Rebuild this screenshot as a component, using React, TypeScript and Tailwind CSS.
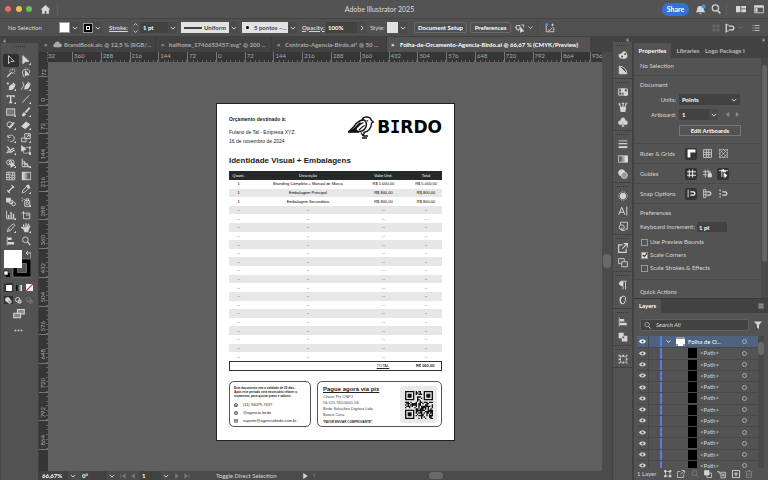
import type { ReactNode } from "react";

type IconProps = { children: ReactNode; className?: string };

// Stroke icon on a 16 unit grid
function Icon({ children, className = "size-[11px]" }: IconProps) {
  return (
    <svg viewBox="0 0 16 16" className={"shrink-0 " + className} fill="none" stroke="currentColor" strokeWidth="1.4" aria-hidden="true">
      {children}
    </svg>
  );
}

function Chevron({ className = "size-[6px]" }: { className?: string }) {
  return (
    <Icon className={className}>
      <path d="M2 5l6 6 6-6" strokeWidth="2.6" />
    </Icon>
  );
}

function Drop({ label }: { label: string }) {
  return (
    <button aria-label={label} className="flex h-[11px] w-[9px] shrink-0 items-center justify-center bg-[#4a4a4a]">
      <Chevron />
    </button>
  );
}

const corner = <path d="M16 16h-3.5l3.5-3.5z" fill="currentColor" stroke="none" />;

const tools: { name: string; art: ReactNode }[] = [
  { name: "Selection", art: <path d="M4 1v13l3.5-3.5 5.5-.5z" /> },
  { name: "Direct Selection", art: <>{corner}<path d="M3 1v13l4-3.5 5.5-.5z" fill="currentColor" /></> },
  { name: "Magic Wand", art: <><path d="M2 14l7-7" strokeWidth="2" /><path d="M10 1v3M10 7v2M5 5h2M13 5h2M12 3l2-2M12 7l2 2M7 2l1 1" /></> },
  { name: "Lasso", art: <><path d="M5 11C1 10 1 3 7 2c6-1 8 4 6 6M3 11c0 2 2 2 2 4" /><path d="M7 4v9l2-2 4 0z" fill="currentColor" /></> },
  { name: "Pen", art: <>{corner}<path d="M1 4h4M3 2v4" /><path d="M5 14l1-6 5-3 3 3-3 5z" fill="currentColor" /><path d="M11 3l4 4" strokeWidth="2" /></> },
  { name: "Curvature", art: <>{corner}<path d="M1 14c0-5 3-3 3-7s-2-4-1-6" /><path d="M6 13l1-6 4-3 3 3-3 5z" fill="currentColor" /><path d="M11 2l4 4" strokeWidth="2" /></> },
  { name: "Type", art: <>{corner}<path d="M2 5V3h11v2M7.500 3v11M5 13.500h5" strokeWidth="2.200" /></> },
  { name: "Line Segment", art: <>{corner}<path d="M2 14L13 2" /></> },
  { name: "Rectangle", art: <>{corner}<rect x="1" y="3" width="13" height="10" fill="#777" /></> },
  { name: "Paintbrush", art: <>{corner}<path d="M14 1L7 9" strokeWidth="2.600" /><path d="M2 14c1-1 0-4 3-5l2 2c0 3-3 4-5 3z" fill="currentColor" /></> },
  { name: "Shaper", art: <>{corner}<ellipse cx="6" cy="7" rx="4.500" ry="4" /><path d="M5 13l8-9" strokeWidth="3" /></> },
  { name: "Eraser", art: <>{corner}<path d="M1 10l7-7 6 4-7 7z" fill="currentColor" /></> },
  { name: "Rotate", art: <>{corner}<path d="M3 3v4h4M3 6c3-4 9-3 10 1s-2 7-6 7" /><path d="M3 10l2 3" strokeDasharray="1 1" /></> },
  { name: "Scale", art: <>{corner}<path d="M6 1h9v8H6zM1 8h7v6H1zM9 7l4-4M10 3h3v3" /></> },
  { name: "Width", art: <>{corner}<path d="M1 3c5 0 3 5 6 5s3-4 6-2M1 13c3-5 5 0 8-2s2-3 5-2" strokeWidth="2" /><circle cx="5" cy="9" r="2" /></> },
  { name: "Free Transform", art: <>{corner}<rect x="4" y="4" width="10" height="9" strokeDasharray="2 1" /><path d="M1 1v9l3-2 4-1z" fill="currentColor" /><path d="M13 3h2v2h-2zM13 12h2v2h-2z" fill="currentColor" /></> },
  { name: "Shape Builder", art: <>{corner}<circle cx="5" cy="7" r="4" /><circle cx="9" cy="7" r="4" /><path d="M8 6v9l2-2 4-1z" fill="currentColor" /></> },
  { name: "Perspective Grid", art: <>{corner}<path d="M2 1v13h12L2 4M2 8l8 3M6 5v9M10 8v6" /></> },
  { name: "Mesh", art: <path d="M1 2h13v12H1zM1 6c5-2 8 3 13 0M1 11c5-3 8 2 13-1M5 2c-2 5 3 7 0 12M10 2c2 5-2 7 0 12" /> },
  { name: "Gradient", art: <><defs><linearGradient id="toolFade"><stop stopColor="#eee" /><stop offset="1" stopColor="#333" /></linearGradient></defs><rect x="2" y="2" width="13" height="12" fill="url(#toolFade)" /></> },
  { name: "Dimension", art: <><path d="M3 13l9-9M2 10l4 4M9 2l4 4" strokeWidth="1.800" /></> },
  { name: "Eyedropper", art: <>{corner}<path d="M2 14l1-4 6-6 3 3-6 6z" /><path d="M9 2l5 5M11 4l2-2" strokeWidth="3" /></> },
  { name: "Blend", art: <><rect x="1" y="2" width="6" height="6" fill="currentColor" /><circle cx="8" cy="8" r="3" fill="#888" /><circle cx="12" cy="11" r="3" /></> },
  { name: "Symbol Sprayer", art: <>{corner}<path d="M6 6h8v9H6zM8 3h4v3H8zM1 2h2M4 4h2M1 6h2" /><circle cx="10" cy="10.500" r="2" /></> },
  { name: "Column Graph", art: <>{corner}<path d="M1 1v13h13" /><path d="M4 13V8M8 13V3M12 13V6" strokeWidth="2.200" /></> },
  { name: "Artboard", art: <><path d="M4 5h10v9H4zM1 5h4M4 2v3M8 8h6" /></> },
  { name: "Slice", art: <>{corner}<path d="M2 14l2-6 8-7 2 3-7 8z" /><path d="M4 10l3 2" /></> },
  { name: "Hand", art: <>{corner}<path d="M4 9L1 7M5 8L4 3M8 7V1M10 8l2-6M12 9l2-4" strokeWidth="2" strokeLinecap="round" /><path d="M4 8h8l-1 6H6z" fill="currentColor" /></> },
  { name: "Align", art: <><path d="M2 1v14" /><path d="M3 4.500h6M3 11.500h10" strokeWidth="4" /></> },
  { name: "Zoom", art: <><circle cx="7" cy="6" r="4.500" /><path d="M10 9l5 5.500" strokeWidth="2" /></> },
];

function Toolbar() {
  return (
    <aside className="flex w-[38px] shrink-0 flex-col border-l border-[#474747] bg-[#535353]">
      <div className="flex h-[6px] items-center bg-[#424242] pl-[2px] text-[7px] leading-none">«</div>
      <div className="mx-[13px] mt-[2px] h-[2px] border-b border-dotted border-[#333]" />
      <div className="mt-[7px] grid h-[193px] grid-cols-2 grid-rows-15 pr-[4px] pl-[2px]">
        {tools.map((t, i) => (
          <button
            key={t.name}
            aria-label={t.name}
            className={i === 0 ? "flex items-center justify-center rounded-xs bg-[#303030]" : "flex items-center justify-center"}
          >
            <Icon className="size-[10px]">{t.art}</Icon>
          </button>
        ))}
      </div>
      <svg viewBox="0 0 28 29" className="mt-[2px] ml-[2px] h-[29px] w-[28px]" aria-label="Fill and stroke" role="img">
        <path d="M10 10h18v18H10zM14.500 14.500h9v9h-9z" fill="#000" fillRule="evenodd" stroke="#999" strokeWidth=".6" />
        <rect x="1" y="1" width="18" height="18" fill="#fff" />
        <path d="M23 4h4v5M24 2l-2 2 2 2" fill="none" stroke="#ccc" transform="translate(1 0)" />
        <rect x="3" y="24" width="4" height="4" fill="#000" />
        <rect x="1" y="22" width="4" height="4" fill="#fff" stroke="#000" strokeWidth=".6" />
      </svg>
      <div className="mt-[5px] grid h-[9px] grid-cols-3 gap-px pr-[4px] pl-[3px]">
        <button aria-label="Color" className="flex items-center justify-center bg-[#303030]"><i className="size-[6px] bg-white" /></button>
        <button aria-label="Gradient" className="flex items-center justify-center"><i className="size-[6px] bg-linear-to-r from-black to-white" /></button>
        <button aria-label="None" className="flex items-center justify-center">
          <svg viewBox="0 0 6 6" className="size-[7px] bg-white"><path d="M0 6L6 0" stroke="#e02020" /></svg>
        </button>
      </div>
      <div className="mt-[4px] grid h-[8px] grid-cols-3 gap-px pr-[4px] pl-[3px]">
        {["Draw Normal", "Draw Behind", "Draw Inside"].map((n, i) => (
          <button key={n} aria-label={n} className={["flex items-center justify-center bg-[#303030]", "flex items-center justify-center", "flex items-center justify-center opacity-30"][i]}>
            <Icon className="size-[7px]"><circle cx="6" cy="6" r="5" fill={i === 0 ? "currentColor" : "none"} strokeWidth="2" /><rect x="7" y="7" width="7" height="7" rx="2" fill="#999" strokeWidth="2" /></Icon>
          </button>
        ))}
      </div>
      <button aria-label="Change Screen Mode" className="mt-[4px] flex justify-center pr-[2px]">
        <Icon className="size-[12px]"><path d="M6 2h9v6H6z" fill="#888" /><path d="M1 7h9v6H1z" fill="#888" /></Icon>
      </button>
      <button aria-label="Edit Toolbar" className="mt-[6px] flex justify-center pr-[2px]">
        <Icon className="size-[9px]"><path d="M1 8h3M6.500 8h3M12 8h3" strokeWidth="3" /></Icon>
      </button>
    </aside>
  );
}

function TitleBar() {
  return (
    <header className="flex h-[19px] shrink-0 items-center border-b border-[#444] bg-[#535353] pr-[4px] pl-[5px]">
      <button aria-label="Close window" className="size-[6px] rounded-full bg-[#ee6a5f]" />
      <button aria-label="Minimize window" className="ml-[5px] size-[6px] rounded-full bg-[#f5bd4f]" />
      <button aria-label="Zoom window" className="ml-[4px] size-[6px] rounded-full bg-[#61c454]" />
      <button aria-label="Home" className="ml-[8px]">
        <Icon className="size-[11px]"><path d="M8 1.500L1 8h2v6h4v-4h2v4h4V8h2z" fill="currentColor" stroke="none" /></Icon>
      </button>
      <i className="ml-[6px] h-[11px] w-px bg-[#606060]" />
      <h1 className="flex-1 pl-[39px] text-center text-[7px] text-[#dcdcdc]">Adobe Illustrator 2025</h1>
      <button className="h-[13px] w-[27px] rounded-full bg-[#3470e0] text-[7px] font-bold text-white">Share</button>
      <button aria-label="Notifications" className="ml-[6px]">
        <Icon className="size-[11px]">
          <path d="M1 12l2-3c0-4 1-6 5-6s5 2 5 6l2 3zM6 13h4l-2 2z" fill="currentColor" stroke="none" />
          <circle cx="12.500" cy="3.500" r="3" fill="#4a8cf0" stroke="none" />
        </Icon>
      </button>
      <button aria-label="Search" className="ml-[5px]">
        <Icon className="size-[10px]"><circle cx="7" cy="6.500" r="5" strokeWidth="2" /><path d="M10.500 10.500l4.500 4.500" strokeWidth="2.400" /></Icon>
      </button>
      <i className="ml-[5px] h-[11px] w-px bg-[#606060]" />
      <button aria-label="Arrange Documents" className="ml-[9px]">
        <Icon className="size-[10px]"><path d="M0 3h7v10H0zM8.500 3H16v4H8.500zM8.500 8.500H16V13H8.500z" fill="currentColor" stroke="none" /></Icon>
      </button>
      <button aria-label="Switch Workspace" className="ml-[8px]">
        <Icon className="size-[10px]"><path d="M1 3h14v11H1z" /><path d="M1 3h14v2H1zM3 7h2v5H3z" fill="currentColor" /></Icon>
      </button>
    </header>
  );
}

function ControlBar() {
  return (
    <div className="flex h-[18px] shrink-0 items-center border-b border-[#404040] bg-[#505050] pr-[8px] pl-[8px]">
      <span className="w-[51px] shrink-0">No Selection</span>
      <button aria-label="Fill color" className="size-[11px] border border-[#999] bg-white" />
      <Drop label="Fill options" />
      <button aria-label="Stroke color" className="ml-[4px] flex size-[10px] items-center justify-center border border-[#999] bg-black">
        <i className="size-[4px] border border-white bg-black" />
      </button>
      <Drop label="Stroke options" />
      <label htmlFor="strokeWeight" className="ml-[7px] w-[22px] font-bold underline">Stroke:</label>
      <span className="flex w-[9px] flex-col items-center gap-[2px]">
        <button aria-label="Increase" className="rotate-180"><Chevron className="size-[5px]" /></button>
        <button aria-label="Decrease"><Chevron className="size-[5px]" /></button>
      </span>
      <input id="strokeWeight" defaultValue="1 pt" className="h-[11px] w-[28px] bg-[#424242] px-[3px] font-bold text-white" />
      <Drop label="Stroke weights" />
      <button className="ml-[4px] flex h-[11px] w-[48px] items-center justify-between bg-[#e2e2e2] px-[3px] font-bold text-[#444]">
        <i className="h-[2px] w-[18px] bg-[#444]" />Uniform
      </button>
      <Drop label="Width profiles" />
      <button className="ml-[4px] flex h-[11px] w-[46px] items-center gap-[5px] bg-[#e2e2e2] pl-[4px] font-bold text-[#444]">
        <i className="size-[3px] rounded-full bg-black" />5 pontos –...
      </button>
      <Drop label="Brushes" />
      <label htmlFor="opacity" className="ml-[5px] w-[24px] font-bold underline">Opacity:</label>
      <input id="opacity" defaultValue="100%" className="h-[11px] w-[31px] bg-[#424242] px-[2px] font-bold text-white" />
      <button aria-label="Opacity slider" className="flex h-[11px] w-[9px] items-center justify-center bg-[#4a4a4a]">
        <span className="-rotate-90"><Chevron /></span>
      </button>
      <span className="ml-[4px] w-[17px]">Style:</span>
      <button aria-label="Graphic style" className="size-[11px] bg-[#e2e2e2]" />
      <Drop label="Graphic styles" />
      <button className="ml-[7px] h-[11px] w-[53px] rounded-xs border border-[#6a6a6a] leading-none font-bold text-white">Document Setup</button>
      <button className="ml-[3px] h-[11px] w-[41px] rounded-xs border border-[#6a6a6a] leading-none font-bold text-white">Preferences</button>
      <button aria-label="Select Similar Objects" className="ml-[4px] flex items-center gap-[3px]">
        <Icon className="size-[10px]"><path d="M2 4h6v6H2zM0 7h2M5 10v3M10 3h4v4" /><path d="M9 7v8l2-2h3z" fill="currentColor" /></Icon>
        <Chevron className="size-[5px]" />
      </button>
      <i className="ml-[4px] h-[18px] w-px bg-[#484848]" />
      <button aria-label="Start Global Edit" className="ml-[7px]">
        <Icon className="size-[10px]"><path d="M4 4H2v10h12V7M5 11l2 1 5-5M12 1v4M10 3h4" /><circle cx="2.500" cy="2.500" r="2.500" fill="#4a8cf0" stroke="none" /></Icon>
      </button>
      <span className="ml-auto flex items-center">
        <Icon className="size-[8px] opacity-30"><path d="M2 2h4v4H2zM10 2h4v4h-4zM2 10h4v4H2zM10 10h4v4h-4z" /></Icon>
        <button aria-label="Snap to Glyph" className="mr-[3px] ml-[5px]">
          <Icon className="size-[10px]"><path d="M2 1v14M6 5h5c4 0 4 6 0 6H6" strokeWidth="2.200" /><path d="M3 3h3M3 13h3" /></Icon>
        </button>
        <span className="opacity-30"><Chevron className="size-[5px]" /></span>
        <button aria-label="Control panel options" className="ml-[9px]">
          <Icon className="size-[8px]"><path d="M1 3h2M5 3h10M1 8h2M5 8h10M1 13h2M5 13h10" strokeWidth="1.600" /></Icon>
        </button>
      </span>
    </div>
  );
}

function DocumentTabs() {
  const base = "flex items-center whitespace-nowrap border-r border-[#3a3a3a] pl-[5px] text-[#aaa]";
  return (
    <div role="tablist" className="flex h-[15px] shrink-0 bg-[#424242] font-bold">
      <button role="tab" className={base + " w-[117px]"}>
        <span className="w-[9px] text-left">×</span>
        <Icon className="size-[9px]"><path d="M3 13c-4-1-3-6 0-6 0-5 8-6 9-1 5 0 5 6 1 7z" fill="currentColor" stroke="none" /></Icon>
        <span className="ml-[2px]">BrandBook.aic @ 12,5 % (RGB/...</span>
      </button>
      <button role="tab" className={base + " w-[116px]"}>
        <span className="w-[8px] text-left">×</span>halftone_1746653457.svg* @ 200 ...
      </button>
      <button role="tab" className={base + " w-[115px]"}>
        <span className="w-[8px] text-left">×</span>Contrato-Agencia-Birdo.ai* @ 50 ...
      </button>
      <button role="tab" aria-selected="true" className="flex w-[203px] items-center bg-[#535353] pl-[4px] whitespace-nowrap text-white">
        <span className="w-[9px] text-left">×</span>Folha-de-Orcamento-Agencia-Birdo.ai @ 66,67 % (CMYK/Preview)
      </button>
    </div>
  );
}

const rulerX = [360, 288, 216, 144, 72, 0, 72, 144, 216, 288, 360, 432, 504, 576, 648, 720, 792, 864];
const rulerY = [0, 72, 144, 216, 288, 360, 432, 504, 576, 648, 720, 792, 864];
const ticks = [0, 1, 2, 3, 4, 5];

function HorizontalRuler() {
  return (
    <div className="flex h-[10px] shrink-0 overflow-hidden bg-[#363636] leading-[8px] text-[#aaa]">
      <div className="w-[9px] border-r border-dotted border-[#666]" />
      <div className="w-[24px]">32</div>
      {rulerX.map((n, i) => (
        <div key={i} className="flex min-w-0 flex-1 flex-col border-l border-[#777] pl-px">
          <span className="h-[8px]">{n}</span>
          <span className="grid h-[2px] grid-cols-6">{ticks.map((t) => <i key={t} className="border-r border-[#666]" />)}</span>
        </div>
      ))}
      <div className="w-[12px] border-l border-[#777] pl-px">936</div>
      <div className="w-[10px] bg-[#4b4b4b]" />
    </div>
  );
}

function VerticalRuler() {
  return (
    <div className="flex w-[9px] shrink-0 flex-col overflow-hidden bg-[#363636] text-[#aaa]">
      <div className="flex h-[14px] rotate-180 items-center leading-[7px] [writing-mode:vertical-rl]">72</div>
      {rulerY.map((n, i) => (
        <div key={i} className="flex min-h-0 flex-1 items-end border-t border-[#777]">
          <span className="w-[7px] rotate-180 pt-[3px] leading-[7px] [writing-mode:vertical-rl]">{n}</span>
          <span className="grid w-[2px] grid-rows-6 self-stretch">{ticks.map((t) => <i key={t} className="border-b border-[#666]" />)}</span>
        </div>
      ))}
      <div className="h-[22px] border-t border-[#777]" />
    </div>
  );
}

function BirdLogo() {
  return (
    <svg viewBox="0 0 26 23" className="h-[23px] w-[26px]" fill="none" stroke="#111" strokeWidth="1.3" strokeLinejoin="round" role="img" aria-label="Bird">
      <path d="M14 5c0-5 8-5.500 9.500-.5L25.500 6 23.500 7c0 5-3 8.500-8 9.500" />
      <path d="M14.500 4C10 5 8 7.500 6 10.500L.8 15.800 11 15.500c5 0 8.500-4.500 7-9.500-.8-2-3.500-2.500-3.500-2z" strokeWidth="1.500" />
      <path d="M15.500 6.500c-3 1-5.500 3.500-8.500 7.500M16.500 9.500c-2 1-3.500 2.500-5.500 4.500M12.500 6.500l-6 6" />
      <path d="M.5 16h10l-4-3.500z" fill="#111" />
      <path d="M13 16.500l2 3.500M16.500 16.500L15 20M15 20h5M14 22h5" />
      <circle cx="19.500" cy="4.800" r=".8" fill="#111" stroke="none" />
    </svg>
  );
}

const QR = 21;

function qrDark(x: number, y: number) {
  for (const [cx, cy] of [[3, 3], [QR - 4, 3], [3, QR - 4]]) {
    const d = Math.max(Math.abs(x - cx), Math.abs(y - cy));
    if (d <= 4) return d === 3 || d <= 1;
  }
  return ((x * 7 + y * 13 + x * y * 5 + ((x * x) ^ (y * 11))) % 7) < 4;
}

function QrCode() {
  let d = "";
  for (let y = 0; y < QR; y++) {
    for (let x = 0; x < QR; x++) if (qrDark(x, y)) d += `M${x} ${y}h1v1h-1z`;
  }
  return (
    <svg viewBox="0 0 21 21" className="size-[28px]" role="img" aria-label="QR code">
      <path d={d} fill="#111" />
    </svg>
  );
}

const items = [
  ["1", "Branding  Completo + Manual de Marca", "R$ 5.000,00", "R$ 5.000,00"],
  ["1", "Embalagem Principal", "R$ 800,00", "R$ 800,00"],
  ["1", "Embalagem Secundária", "R$ 800,00", "R$ 800,00"],
  ...Array.from({ length: 18 }, () => ["--", "--", "--", "--"]),
];

function Artboard() {
  return (
    <article className="mt-[41px] ml-[168px] flex h-[338px] w-[239px] shrink-0 flex-col border border-[#222] bg-white px-[12px] font-['Liberation_Sans',sans-serif] text-[5px] text-[#222]">
      <div className="mt-[11px] flex justify-between">
        <div className="leading-[8px]">
          <p className="font-bold">Orçamento destinado à:</p>
          <p className="mt-[5px]">Fulano de Tal - Empresa XYZ</p>
          <p className="mt-px">16 de novembro de 2024</p>
        </div>
        <div className="flex h-[25px] items-center gap-[3px] text-black">
          <BirdLogo />
          <span className="font-['DejaVu_Sans',sans-serif] text-[17px] leading-[17px] font-bold">
            B<span className="font-['DejaVu_Sans_Mono',monospace]">I</span>RDO
          </span>
        </div>
      </div>
      <h2 className="mt-[10px] text-[8px] leading-[12px] font-bold">Identidade Visual + Embalagens</h2>
      <table className="mt-[4px] h-[190px] w-full table-fixed border-collapse text-center text-[4px] leading-[6px]">
        <thead>
          <tr className="h-[9px] bg-[#262929] text-white">
            <th className="w-[9%] p-0 font-normal">Quant.</th>
            <th className="w-[51%] p-0 pl-[11px] font-normal">Descrição</th>
            <th className="w-[25%] p-0 font-normal">Valor Unit.</th>
            <th className="w-[15%] p-0 font-normal">Total</th>
          </tr>
        </thead>
        <tbody>
          {items.map((row, i) => (
            <tr key={i} className="text-black even:bg-[#e7e7e7]">
              <td className="p-0">{row[0]}</td>
              <td className="p-0 pl-[11px]">{row[1]}</td>
              <td className="p-0">{row[2]}</td>
              <td className="p-0">{row[3]}</td>
            </tr>
          ))}
        </tbody>
      </table>
      <div className="flex h-[10px] shrink-0 items-center border border-[#333] text-[4px] leading-none">
        <span className="w-[60%]" />
        <span className="w-[25%] text-center underline">TOTAL</span>
        <b className="w-[15%] text-center">R$ 000,00</b>
      </div>
      <div className="mt-[10px] flex gap-[6px] text-[4px]">
        <section className="h-[46px] w-[82px] rounded-[5px] border border-[#555] pt-[4px] pl-[4px]">
          <p className="text-[3px] leading-[4px] font-bold whitespace-nowrap">
            Este documento tem a validade de 05 dias.<br />Após este período será necessário refazer o<br />orçamento, para ajustar prazo e valores.
          </p>
          <ul className="mt-[3px] leading-[8px]">
            <li className="flex items-center gap-[5px]">
              <Icon className="size-[4px]"><circle cx="8" cy="8" r="6" strokeWidth="3" /><path d="M2 15l2-4M5 6l5 5" strokeWidth="3" /></Icon>(11) 94079-7437
            </li>
            <li className="flex items-center gap-[5px]">
              <Icon className="size-[4px]"><rect x="2" y="2" width="12" height="12" rx="3" strokeWidth="2.600" /><circle cx="8" cy="8" r="3" strokeWidth="2" /></Icon>@agencia.birdo
            </li>
            <li className="flex items-center gap-[5px]">
              <Icon className="size-[4px]"><path d="M1 3h14v10H1zl7 6 7-6" strokeWidth="2.400" /></Icon>suporte@agenciabirdo.com.br
            </li>
          </ul>
        </section>
        <section className="flex h-[46px] flex-1 justify-between rounded-[5px] border border-[#555] pt-[4px] pr-[4px] pl-[5px] whitespace-nowrap">
          <div className="leading-[6px]">
            <h3 className="text-[6px] leading-[6px] font-bold underline">Pague agora via pix</h3>
            <p className="mt-[2px] text-[#444]">Chave Pix CNPJ<br />56.125.761/0001-56<br />Birdo Soluções Digitais Ltda<br />Banco Cora</p>
            <p className="mt-px text-[3px] font-bold">*FAVOR ENVIAR COMPROVANTE*</p>
          </div>
          <div className="flex size-[37px] items-center justify-center rounded-[3px] bg-[#e9e9e9]">
            <QrCode />
          </div>
        </section>
      </div>
    </article>
  );
}

function StatusBar() {
  return (
    <footer className="flex h-[9px] shrink-0 items-center overflow-hidden bg-[#4b4b4b] leading-none">
      <input aria-label="Zoom level" defaultValue="66,67%" className="h-[9px] w-[29px] bg-[#414141] pl-[3px] font-bold text-white" />
      <Drop label="Zoom presets" />
      <input aria-label="Rotate view" defaultValue="0°" className="ml-[4px] h-[9px] w-[26px] bg-[#414141] pl-px font-bold text-white" />
      <Drop label="Rotate presets" />
      <span className="flex w-[24px] justify-center gap-[4px] text-[#777]">
        <Icon className="size-[6px]"><path d="M2 2v12M14 2L6 8l8 6z" fill="currentColor" strokeWidth="2" /></Icon>
        <Icon className="size-[6px]"><path d="M12 2L4 8l8 6z" fill="currentColor" /></Icon>
      </span>
      <input aria-label="Artboard number" defaultValue="1" className="h-[9px] w-[21px] bg-[#414141] pl-[2px] font-bold text-white" />
      <Drop label="Artboard navigation" />
      <span className="flex w-[24px] justify-center gap-[4px] text-[#777]">
        <Icon className="size-[6px]"><path d="M4 2l8 6-8 6z" fill="currentColor" /></Icon>
        <Icon className="size-[6px]"><path d="M14 2v12M2 2l8 6-8 6z" fill="currentColor" strokeWidth="2" /></Icon>
      </span>
      <span className="w-[108px] pl-[22px] whitespace-nowrap">Toggle Direct Selection</span>
      <Icon className="size-[6px]"><path d="M4 1l10 7-10 7z" fill="currentColor" /></Icon>
      <span className="ml-[4px] rotate-90 text-[#888]"><Chevron className="size-[5px]" /></span>
      <i className="ml-[112px] h-[7px] w-[14px] rounded-full bg-[#696969]" />
    </footer>
  );
}

const dock: { name: string; art: ReactNode }[][] = [
  [
    { name: "Color", art: <path d="M1 9c0-4 5-2 6-5s5-3 7 1 1 9-4 9-9-1-9-5zM5 9h3v3H5zM10 5h3v3h-3z" fill="currentColor" fillRule="evenodd" stroke="none" /> },
    { name: "Color Guide", art: <><path d="M2 2l12 12H2z" fill="currentColor" /><path d="M2 2c7 0 12 5 12 12" /></> },
  ],
  [
    { name: "Swatches", art: <><path d="M1 3h14v10H1zM1 8h14M6 3v10M10 3v10" /><path d="M6 3h4v5H6zM10 8h5v5h-5z" fill="currentColor" /></> },
    { name: "Brushes", art: <path d="M4 9h8l-1 6H5zM8 9V2M5 8L2 4M11 8l2-5M6 2h4M1 3h3M12 2h3" fill="currentColor" strokeWidth="1.800" /> },
    { name: "Symbols", art: <><circle cx="8" cy="4.500" r="3" fill="currentColor" /><circle cx="4" cy="9" r="3" fill="currentColor" /><circle cx="12" cy="9" r="3" fill="currentColor" /><path d="M8 8v6M6 14.500h4" strokeWidth="2" /></> },
  ],
  [
    { name: "Stroke", art: <><path d="M1 3h14" /><path d="M1 7.500h14" strokeWidth="2" /><path d="M1 13h14" strokeWidth="3" /></> },
    { name: "Gradient", art: <><defs><linearGradient id="dockFade"><stop stopColor="#333" /><stop offset="1" stopColor="#fff" /></linearGradient></defs><rect x="1" y="3" width="14" height="10" fill="url(#dockFade)" /></> },
    { name: "Transparency", art: <><circle cx="6" cy="6" r="5" fill="currentColor" /><circle cx="10" cy="10" r="5" fill="#999" /></> },
  ],
  [
    { name: "Appearance", art: <><circle cx="8" cy="8" r="4.500" fill="currentColor" /><circle cx="8" cy="8" r="6.800" strokeDasharray="1.500 1.500" /></> },
    { name: "Character Styles", art: <path d="M1 14L6 2l5 12M3 10h6M14 1v14" strokeWidth="1.600" /> },
    { name: "Graphic Styles", art: <><path d="M4 6V2h11v11h-4" /><circle cx="6" cy="10" r="4" /><path d="M6 10v5h5" /></> },
  ],
  [
    { name: "Asset Export", art: <path d="M7 3H1v12h12V9M9 1h6v6M15 1L7 9" strokeWidth="1.800" /> },
    { name: "Artboards", art: <><path d="M1 1h9v8H1z" /><path d="M6 6h9v8H6z" fill="#535353" /></> },
  ],
  [
    { name: "Paragraph", art: <path d="M14 2H6c-5 0-5 7 0 7h2V2M8 9v6M12 2v13" fill="currentColor" /> },
    { name: "OpenType", art: <><ellipse cx="8" cy="8" rx="4" ry="6.500" transform="rotate(15 8 8)" /><path d="M5 3C3 6 3 11 6 14" strokeWidth="2.400" /></> },
  ],
  [
    { name: "Align", art: <><path d="M2 1v14" /><path d="M3 5h7M3 11h11" strokeWidth="4" /></> },
    { name: "Pathfinder", art: <path d="M1 1h8v5h6v9H6V10H1zM7 7h3v3H7z" fill="currentColor" fillRule="evenodd" stroke="none" /> },
  ],
  [{ name: "Transform", art: <><path d="M4 4h9v9H4z" strokeDasharray="2 1" /><path d="M1 1h3v3H1zM7 1h3v3H7zM13 1h2v3h-2zM1 7h3v3H1zM1 13h3v2H1zM7 13h3v2H7zM13 7h2v3h-2zM13 13h2v2h-2z" fill="currentColor" stroke="none" /></> }],
];

function Dock() {
  return (
    <nav aria-label="Panels" className="w-[21px] shrink-0 border-x border-[#424242] bg-[#535353]">
      <div className="h-[5px] bg-[#424242] pr-[3px] text-right text-[7px] leading-[5px]">«</div>
      {dock.map((group, g) => (
        <div key={g} className="border-b border-[#424242] pb-px">
          <div className="mx-[4px] h-[5px] pt-[3px]"><i className="block border-t border-dotted border-[#333]" /></div>
          {group.map((p) => (
            <button key={p.name} aria-label={p.name} className="flex h-[15px] w-full items-center justify-center">
              <Icon className="size-[10px]">{p.art}</Icon>
            </button>
          ))}
        </div>
      ))}
    </nav>
  );
}

function IconRow({ label, icons, on }: { label: string; icons: ReactNode[]; on: boolean[] }) {
  return (
    <div className="flex h-[20px] items-center border-t border-[#484848] pl-[6px]">
      <span className="w-[45px]">{label}</span>
      {icons.map((art, i) => (
        <button key={i} aria-label={label + " " + (i + 1)} aria-pressed={on[i]} className={on[i] ? "mr-[4px] flex size-[12px] items-center justify-center rounded-xs bg-[#333] text-white" : "mr-[4px] flex size-[12px] items-center justify-center"}>
          <Icon className="size-[9px]">{art}</Icon>
        </button>
      ))}
    </div>
  );
}

const magnet = <path d="M6 5h5c4 0 4 6 0 6H6" strokeWidth="2.2" />;

function Properties() {
  return (
    <section className="relative flex flex-col pr-[8px]">
      <div className="h-[17px] pt-[4px] pl-[6px]">No Selection</div>
      <div className="h-[68px] border-t border-[#484848] pt-[5px] pl-[6px]">
        <h2 className="leading-[8px]">Document</h2>
        <div className="mt-[5px] flex items-center">
          <label htmlFor="units" className="w-[36px] text-right">Units:</label>
          <span className="ml-[3px] flex h-[11px] w-[61px] items-center bg-[#424242] pr-[3px]">
            <select id="units" className="w-full appearance-none pl-[3px] font-bold text-white"><option>Points</option></select>
            <Chevron />
          </span>
        </div>
        <div className="mt-[4px] flex items-center">
          <label htmlFor="artboard" className="w-[36px] text-right">Artboard:</label>
          <input id="artboard" defaultValue="1" className="ml-[3px] h-[11px] w-[30px] bg-[#424242] pl-[3px] font-bold text-white" />
          <Drop label="Artboard list" />
          <Icon className="ml-[7px] size-[5px] opacity-40"><path d="M13 1L3 8l10 7z" fill="currentColor" /></Icon>
          <Icon className="ml-[5px] size-[5px] opacity-40"><path d="M3 1l10 7-10 7z" fill="currentColor" /></Icon>
        </div>
        <button className="mt-[5px] ml-[39px] h-[11px] w-[62px] border border-[#777] leading-none font-bold text-white">Edit Artboards</button>
      </div>
      <IconRow
        label="Ruler & Grids"
        on={[true, false, false]}
        icons={[
          <path key="a" d="M1 1h14v5H6v9H1z" fill="currentColor" stroke="none" />,
          <path key="b" d="M1 1h14v14H1zM1 6h14M1 10h14M6 1v14M10 1v14" />,
          <path key="c" d="M1 1h14v14H1zM1 1l14 14M15 1L1 15M8 1L1 8l7 7 7-7z" strokeDasharray="2 1" />,
        ]}
      />
      <IconRow
        label="Guides"
        on={[true, false, true]}
        icons={[
          <path key="a" d="M0 5h16M0 11h16M4 1v14M10 1v14" strokeWidth="1.6" />,
          <><path d="M0 5h14M0 10h7M4 1v14M9 1v6" /><path d="M9 9h6v5H9zM10 9V7h4v2" fill="currentColor" /></>,
          <><path d="M0 3h16M5 1v13M9 8v7" /><path d="M7 0l5 5h-5zM9 8l5 3-3 4z" fill="currentColor" /></>,
        ]}
      />
      <IconRow
        label="Snap Options"
        on={[true, false, false]}
        icons={[
          <><path d="M2 1v14" />{magnet}</>,
          <><path d="M1 1h4v14H1zM1 5h4M1 10h4" />{magnet}</>,
          <><path d="M2 1v3M2 7v3M2 13v2" strokeWidth="2.400" />{magnet}</>,
        ]}
      />
      <div className="h-[76px] border-t border-[#484848] pt-[5px] pl-[6px]">
        <h2 className="leading-[8px]">Preferences</h2>
        <div className="mt-[5px] mb-[6px] flex h-[10px] items-center">
          <label htmlFor="increment" className="w-[57px]">Keyboard Increment:</label>
          <input id="increment" defaultValue="1 pt" className="h-[10px] w-[30px] bg-[#424242] pl-[2px] font-bold text-white" />
        </div>
        {["Use Preview Bounds", "Scale Corners", "Scale Strokes & Effects"].map((l, i) => (
          <label key={l} className="mb-[5px] flex h-[8px] items-center gap-[2px] pl-px">
            <input type="checkbox" defaultChecked={i === 1} className="peer sr-only" />
            <span className="flex size-[7px] items-center justify-center border border-[#999] text-transparent peer-checked:bg-[#ddd] peer-checked:text-[#333]">
              <Icon className="size-[6px]"><path d="M2 8l4 4 8-9" strokeWidth="3" /></Icon>
            </span>
            {l}
          </label>
        ))}
      </div>
      <h2 className="h-[19px] border-t border-[#484848] pt-[8px] pl-[6px]">Quick Actions</h2>
      <div className="absolute inset-y-0 right-0 w-[7px] bg-[#494949] pt-[7px]">
        <i className="mx-px block h-[197px] rounded-full bg-[#636363]" />
      </div>
    </section>
  );
}

function LayerRow({ root }: { root?: boolean }) {
  return (
    <li className={root ? "flex items-center bg-[#4d6380] text-white" : "flex items-center border-t border-[#484848]"}>
      <button aria-label="Toggle visibility" className="flex h-full w-[11px] items-center justify-center">
        <Icon className="size-[7px]"><path d="M0 8c4-6 12-6 16 0-4 6-12 6-16 0z" fill="currentColor" stroke="none" /><circle cx="8" cy="8" r="2.500" fill="#444" stroke="none" /></Icon>
      </button>
      <span className="h-full w-[12px] border-l border-[#4a4a4a]" />
      <span className="h-full w-[2px] bg-[#5b7be0]" />
      {root ? (
        <>
          <button aria-label="Collapse layer" className="ml-[4px]"><Chevron className="size-[5px]" /></button>
          <svg viewBox="0 0 9 9" className="ml-[5px] size-[9px] bg-white"><path d="M1 0v2M8 0v2M1 9V7M8 9V7M2 1h5" stroke="#333" /></svg>
        </>
      ) : (
        <i className="ml-[26px] h-[10px] w-[9px] bg-black" />
      )}
      <span className="ml-[3px]">{root ? "Folha de O..." : "<Path>"}</span>
      <i className="mr-[11px] ml-auto size-[5px] rounded-full border border-[#aaa]" />
    </li>
  );
}

function Layers() {
  return (
    <section className="flex min-h-0 flex-1 flex-col">
      <div className="flex h-[15px] shrink-0 items-stretch justify-between border-t border-[#383838] bg-[#424242]">
        <h2 className="flex w-[27px] items-center bg-[#535353] pl-[5px] font-bold text-white">Layers</h2>
        <button aria-label="Layers menu" className="mr-[4px]"><Icon className="size-[6px]"><path d="M1 3h14M1 8h14M1 13h14" strokeWidth="2" /></Icon></button>
      </div>
      <div className="mt-[6px] flex items-center pr-[6px] pl-[6px]">
        <label className="flex h-[12px] flex-1 items-center gap-[5px] rounded-xs border border-[#606060] bg-[#424242] pl-[3px]">
          <Icon className="size-[7px]"><circle cx="7" cy="6" r="5" /><path d="M10 10l5 5" strokeWidth="2" /></Icon>
          <input aria-label="Search layers" placeholder="Search All" className="w-full italic placeholder:text-[#ddd]" />
        </label>
        <button aria-label="Filter layers" className="ml-[5px]"><Icon className="size-[8px]"><path d="M0 1h16l-6 7v8l-4-3V8z" fill="currentColor" stroke="none" /></Icon></button>
      </div>
      <div className="mt-[5px] flex min-h-0 flex-1 overflow-hidden pl-[3px]">
        <ul className="grid h-[135px] flex-1 grid-rows-12">
          <LayerRow root />
          {Array.from({ length: 11 }, (_, i) => <LayerRow key={i} />)}
        </ul>
        <div className="mr-[4px] w-[6px] bg-[#494949] pt-[6px]"><i className="block h-[13px] rounded-full bg-[#6a6a6a]" /></div>
      </div>
      <div className="flex h-[12px] shrink-0 items-center justify-between pr-[15px] pl-[3px]">
        <span className="mr-[2px]">1 Layer</span>
        <Icon className="size-[8px]"><path d="M3 3h9v9H3z" /><path d="M1 1h3v3H1zM11 1h3v3h-3zM1 11h3v3H1zM11 11h3v3h-3z" fill="currentColor" /></Icon>
        <Icon className="size-[8px]"><path d="M7 3H1v12h12V9M9 1h6v6M15 1L7 9" /></Icon>
        <Icon className="size-[8px] opacity-40"><circle cx="7" cy="6" r="5" /><path d="M10 10l5 5" /></Icon>
        <Icon className="size-[8px]"><path d="M1 1h9v9H1z" fill="currentColor" /><path d="M6 6h9v9H6z" /></Icon>
        <Icon className="size-[9px]"><path d="M0 3h4v3h3M7 4h8v10H7zM11 6v6M8 9h6" /></Icon>
        <Icon className="size-[8px]"><path d="M1 1h14v14H1zM8 4v8M4 8h8" strokeWidth="1.800" /></Icon>
        <Icon className="size-[8px] opacity-40"><path d="M1 3h14M3 4v11h10V4M6 1h4M6 6v6M10 6v6" /></Icon>
      </div>
    </section>
  );
}

export default function App() {
  return (
    <div className="flex h-screen flex-col overflow-hidden bg-[#535353] font-['Lato',sans-serif] text-[6px] leading-[8px] text-[#d6d6d6]">
      <TitleBar />
      <ControlBar />
      <div className="flex min-h-0 flex-1">
        <Toolbar />
        <main className="flex min-w-0 flex-1 flex-col border-l border-[#404040]">
          <DocumentTabs />
          <HorizontalRuler />
          <div className="flex min-h-0 flex-1">
            <VerticalRuler />
            <div className="min-w-0 flex-1 overflow-hidden bg-[#5f5f5f]"><Artboard /></div>
            <div className="flex w-[10px] flex-col bg-[#4b4b4b] pt-[192px]"><i className="mx-px h-[14px] rounded-full bg-[#696969]" /></div>
          </div>
          <StatusBar />
        </main>
        <Dock />
        <aside className="flex w-[135px] shrink-0 flex-col border-l border-[#424242]">
          <div className="h-[6px] shrink-0 bg-[#424242] pr-[3px] text-right text-[7px] leading-[5px]">»</div>
          <div role="tablist" className="flex h-[15px] shrink-0 bg-[#424242] font-bold whitespace-nowrap">
            <button role="tab" aria-selected="true" className="w-[37px] bg-[#535353] text-white">Properties</button>
            <button role="tab" className="w-[34px] text-[#bbb]">Libraries</button>
            <button role="tab" className="w-[41px] overflow-hidden text-left text-[#bbb]">Logo Package I</button>
          </div>
          <Properties />
          <Layers />
        </aside>
      </div>
    </div>
  );
}
